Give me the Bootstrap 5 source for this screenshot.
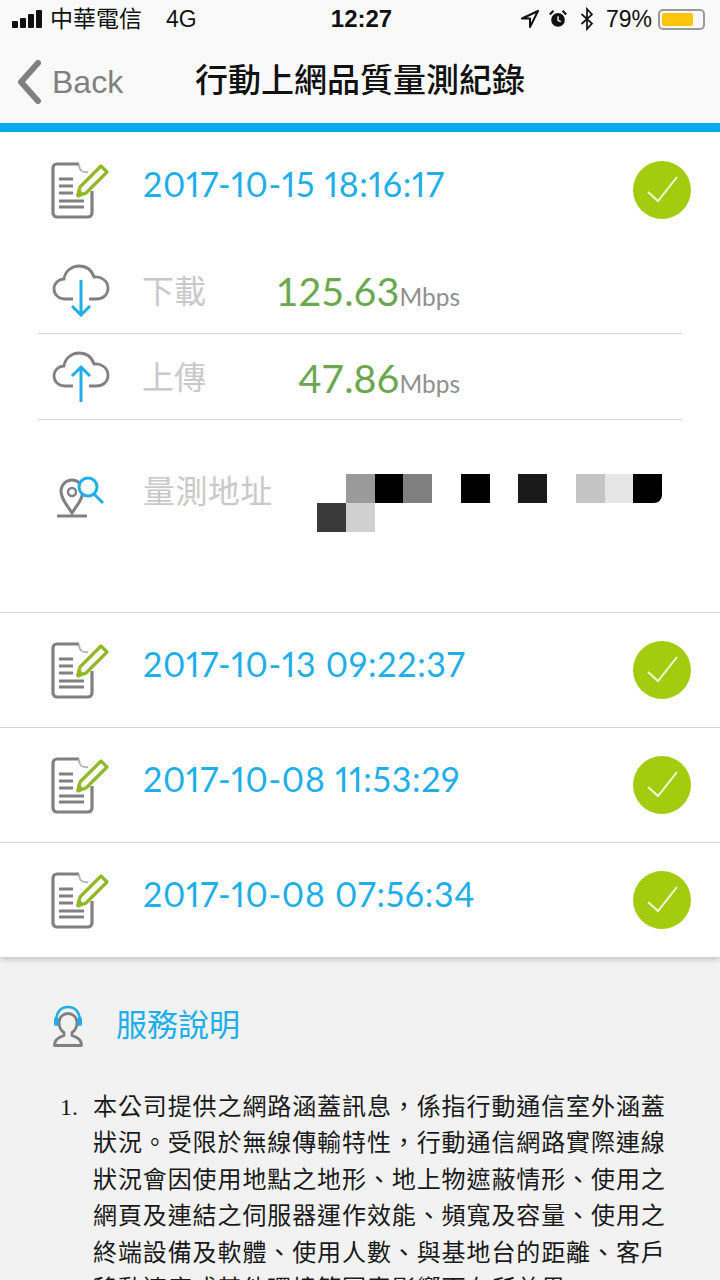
<!DOCTYPE html>
<html lang="zh-TW">
<head>
    <meta charset="UTF-8">
    <meta name="viewport" content="width=device-width, initial-scale=1.0">
    <title>行動上網品質量測紀錄</title>
    <link href="https://cdn.jsdelivr.net/npm/bootstrap@5.3.0/dist/css/bootstrap.min.css" rel="stylesheet">
    <style>
        html, body { height: 1280px; overflow: hidden; }
        body { background: #f2f2f2; font-family: "Liberation Sans", "Noto Sans CJK TC", sans-serif; }

        .status-line { height: 40px; background: #f9f9f9; padding: 0 15px 2px 12px; font-size: 23px; color: #111; }
        .status-left, .status-right { width: 290px; }
        .status-time { font-weight: 700; font-size: 24px; margin-left: 6px; }
        .signal-bars { gap: 2px; align-items: flex-end; height: 18px; }
        .signal-bars i { display: block; width: 6px; background: #111; border-radius: 1px; }
        .batt-box { width: 47px; height: 21px; border: 2px solid #999; border-radius: 5px; padding: 2px; margin-left: -2px; }
        .batt-fill { height: 100%; background: #fdc50a; border-radius: 2px; }
        .title-bar { height: 83px; background: #f9f9f9; }
        .back-link { width: 200px; padding-left: 16px; color: #808080; font-size: 32px; gap: 10px; }
        .page-title { font-size: 33px; color: #111; font-weight: 500; line-height: 1; margin: -3px 0 0 -5px; }
        .accent-bar { height: 9px; background: #00aeef; }

        .records { background: #fff; box-shadow: 0 2px 6px rgba(0,0,0,.22); position: relative; }
        .rec-row { height: 115px; border-top: 1px solid #d5d5d5; padding: 28px 29px 0 51px; }
        .rec-row.first { border-top: 0; height: 115px; padding-top: 29px; }
        .rec-date { color: #1eaee8; font-size: 34px; font-family: "Lato", sans-serif; font-variant-numeric: proportional-nums; margin-left: 32px; margin-top: -2px; line-height: 50px; letter-spacing: .7px; }
        .ok-mark { width: 58px; height: 58px; }
        .detail { height: 365px; }
        .speed-row { margin: 0 38px; height: 86px; border-bottom: 1px solid #d5d5d5; padding-left: 14px; }
        .speed-row.top-row { height: 87px; }
        .speed-label { color: #c9c9c9; font-size: 32px; margin-left: 32px; width: 130px; padding-top: 3px; }
        .speed-val { width: 188px; text-align: right; color: #6aa84f; font-size: 39.5px; font-family: "Lato", sans-serif; line-height: 1; padding-top: 2px; white-space: nowrap; }
        .speed-val small { color: #8f8f8f; font-size: 24.5px; }
        .addr-row { margin: 0 38px; padding: 55px 0 0 18px; }
        .addr-label { color: #c9c9c9; font-size: 32px; margin-left: 37px; line-height: 1; margin-top: 1px; width: 174px; letter-spacing: .4px; white-space: nowrap; }
        .mosaic { display: grid; grid-template-columns: repeat(12, 28.75px); grid-auto-rows: 29px; margin: -1px 0 0 0; }
        .mosaic i { display: block; }

        .service { padding: 46px 30px 0 53px; }
        .service-head { gap: 33px; color: #1eaee8; font-size: 31px; }
        .terms { margin: 39px 0 0 7px; padding: 0; font-size: 24px; line-height: 36.5px; color: #1a1a1a; letter-spacing: .9px; }
        .terms-no { flex: 0 0 33px; font-family: "Liberation Serif", serif; letter-spacing: 0; }
    </style>
</head>
<body>
    <!-- status bar -->
    <div class="status-line d-flex align-items-center justify-content-between">
        <div class="status-left d-flex align-items-center">
            <span class="signal-bars d-flex me-2">
                <i style="height:7px"></i><i style="height:10px"></i><i style="height:14px"></i><i style="height:18px"></i>
            </span>
            <span>中華電信</span><span class="ms-4">4G</span>
        </div>
        <div class="status-time">12:27</div>
        <div class="status-right d-flex align-items-center justify-content-end gap-2">
            <svg width="20" height="20" viewBox="0 0 20 20"><path d="M18 2 2 9.5h8V18z" fill="none" stroke="#111" stroke-width="2" stroke-linejoin="round"/></svg>
            <svg class="me-1" width="20" height="20" viewBox="0 0 22 22"><circle cx="11" cy="12" r="7.5" fill="#111"/><path d="M11 8v4.5l3 1.5" fill="none" stroke="#fff" stroke-width="1.5"/><path d="M2 6l4-4M20 6l-4-4" stroke="#111" stroke-width="2.4"/></svg>
            <svg class="me-1" width="14" height="24" viewBox="0 0 14 24"><path d="M1.5 7 12 16.5 7 22V2l5 5.5L1.5 17" fill="none" stroke="#111" stroke-width="1.7"/></svg>
            <span>79%</span>
            <div class="batt-box"><div class="batt-fill" style="width:80%"></div></div>
        </div>
    </div>

    <!-- title -->
    <div class="title-bar d-flex align-items-center">
        <div class="back-link d-flex align-items-center">
            <svg width="26" height="44" viewBox="0 0 26 44"><path d="M22 3 5 22l17 19" fill="none" stroke="#808080" stroke-width="6" stroke-linecap="round" stroke-linejoin="round"/></svg>
            <span>Back</span>
        </div>
        <h1 class="page-title">行動上網品質量測紀錄</h1>
    </div>
    <div class="accent-bar"></div>

    <svg class="d-none">
        <symbol id="ic-note" viewBox="0 0 60 58">
            <path d="M28 3H6a4 4 0 0 0-4 4v45a4 4 0 0 0 4 4h31a4 4 0 0 0 4-4V30" fill="none" stroke="#808080" stroke-width="3.2" stroke-linejoin="round"/>
            <path d="M28 3c0 6 3 9 9 8" fill="none" stroke="#b5b5b5" stroke-width="2"/>
            <path d="M8 18h14M8 25h14M8 32h14M8 40h25M8 46h25" stroke="#808080" stroke-width="3"/>
            <path d="M29 26 50 5l6 6-21 21-8 3z" fill="#fff" stroke="#90b828" stroke-width="3.2" stroke-linejoin="round"/>
            <path d="M25 35l2-8 6 6z" fill="#90b828"/>
        </symbol>
        <symbol id="ic-ok" viewBox="0 0 58 58">
            <circle cx="29" cy="29" r="29" fill="#a4cc0e"/>
            <path d="M15 31l10 9 19-24" fill="none" stroke="#f4f8d8" stroke-width="2"/>
        </symbol>
    </svg>

    <div class="records">
        <div class="rec-row first d-flex">
            <svg width="60" height="58"><use href="#ic-note"/></svg>
            <div class="rec-date flex-grow-1">2017-10-15 18:16:17</div>
            <svg class="ok-mark" viewBox="0 0 58 58"><use href="#ic-ok"/></svg>
        </div>
        <div class="detail">
            <div class="speed-row top-row d-flex align-items-center">
                <svg width="58" height="54" viewBox="0 0 58 54"><path d="M21 36H13C6 36 2 31 2 26c0-6 5-10 10-10 1-8 8-13 15-13 8 0 13 5 15 11 7-1 14 4 14 11s-5 11-12 11h-7" fill="none" stroke="#808080" stroke-width="2.8"/><path d="M29 17v35M20 43l9 9 9-9" fill="none" stroke="#1eaee8" stroke-width="3"/></svg>
                <div class="speed-label">下載</div>
                <div class="speed-val">125.63<small>Mbps</small></div>
            </div>
            <div class="speed-row d-flex align-items-center">
                <svg width="58" height="54" viewBox="0 0 58 54"><path d="M21 36H13C6 36 2 31 2 26c0-6 5-10 10-10 1-8 8-13 15-13 8 0 13 5 15 11 7-1 14 4 14 11s-5 11-12 11h-7" fill="none" stroke="#808080" stroke-width="2.8"/><path d="M29 52V17M20 26l9-9 9 9" fill="none" stroke="#1eaee8" stroke-width="3"/></svg>
                <div class="speed-label">上傳</div>
                <div class="speed-val">47.86<small>Mbps</small></div>
            </div>
            <div class="addr-row d-flex align-items-start">
                <svg width="50" height="43" viewBox="0 0 50 43"><path d="M16 38C11 30 5 24 5 16a11 11 0 0 1 22 0c0 8-6 14-11 22z" fill="none" stroke="#808080" stroke-width="3"/><circle cx="16" cy="17" r="4" fill="none" stroke="#808080" stroke-width="2.4"/><path d="M1 41h30" stroke="#808080" stroke-width="3"/><circle cx="32" cy="12" r="9" fill="#fff" stroke="#1eaee8" stroke-width="3"/><path d="M38 19l9 9" stroke="#1eaee8" stroke-width="3"/></svg>
                <div class="addr-label">量測地址</div>
                <div class="mosaic">
                    <i></i><i style="background:#9a9a9a"></i><i style="background:#000"></i><i style="background:#808080"></i><i></i><i style="background:#000"></i><i></i><i style="background:#1a1a1a"></i><i></i><i style="background:#c4c4c4"></i><i style="background:#e6e6e6"></i><i style="background:#000;border-bottom-right-radius:8px"></i>
                    <i style="background:#3a3a3a"></i><i style="background:#d0d0d0"></i>
                </div>
            </div>
        </div>
        <div class="rec-row d-flex">
            <svg width="60" height="58"><use href="#ic-note"/></svg>
            <div class="rec-date flex-grow-1">2017-10-13 09:22:37</div>
            <svg class="ok-mark" viewBox="0 0 58 58"><use href="#ic-ok"/></svg>
        </div>
        <div class="rec-row d-flex">
            <svg width="60" height="58"><use href="#ic-note"/></svg>
            <div class="rec-date flex-grow-1">2017-10-08 11:53:29</div>
            <svg class="ok-mark" viewBox="0 0 58 58"><use href="#ic-ok"/></svg>
        </div>
        <div class="rec-row d-flex">
            <svg width="60" height="58"><use href="#ic-note"/></svg>
            <div class="rec-date flex-grow-1">2017-10-08 07:56:34</div>
            <svg class="ok-mark" viewBox="0 0 58 58"><use href="#ic-ok"/></svg>
        </div>
    </div>

    <div class="service">
        <div class="service-head d-flex align-items-center">
            <svg width="30" height="42" viewBox="0 0 30 42"><path d="M1.5 40.5c0-6 4-8 9.5-10v-3c-3-2-5-6-5-10 0-5 4-9 9-9s9 4 9 9c0 4-2 8-5 10v3c5.5 2 9.5 4 9.5 10z" fill="none" stroke="#808080" stroke-width="2.8" stroke-linejoin="round"/><path d="M3 16C3 7 8 2 15 2s12 5 12 14" fill="none" stroke="#1eaee8" stroke-width="2.6"/><rect x="1" y="12" width="4.5" height="9" rx="2.2" fill="#1eaee8"/><rect x="24.5" y="12" width="4.5" height="9" rx="2.2" fill="#1eaee8"/></svg>
            <span>服務說明</span>
        </div>
        <ol class="terms list-unstyled">
            <li class="d-flex"><span class="terms-no">1.</span><span>本公司提供之網路涵蓋訊息，係指行動通信室外涵蓋狀況。受限於無線傳輸特性，行動通信網路實際連線狀況會因使用地點之地形、地上物遮蔽情形、使用之網頁及連結之伺服器運作效能、頻寬及容量、使用之終端設備及軟體、使用人數、與基地台的距離、客戶移動速度或其他環境等因素影響而有所差異。</span></li>
        </ol>
    </div>

    <script src="https://cdn.jsdelivr.net/npm/bootstrap@5.3.0/dist/js/bootstrap.bundle.min.js"></script>
</body>
</html>
